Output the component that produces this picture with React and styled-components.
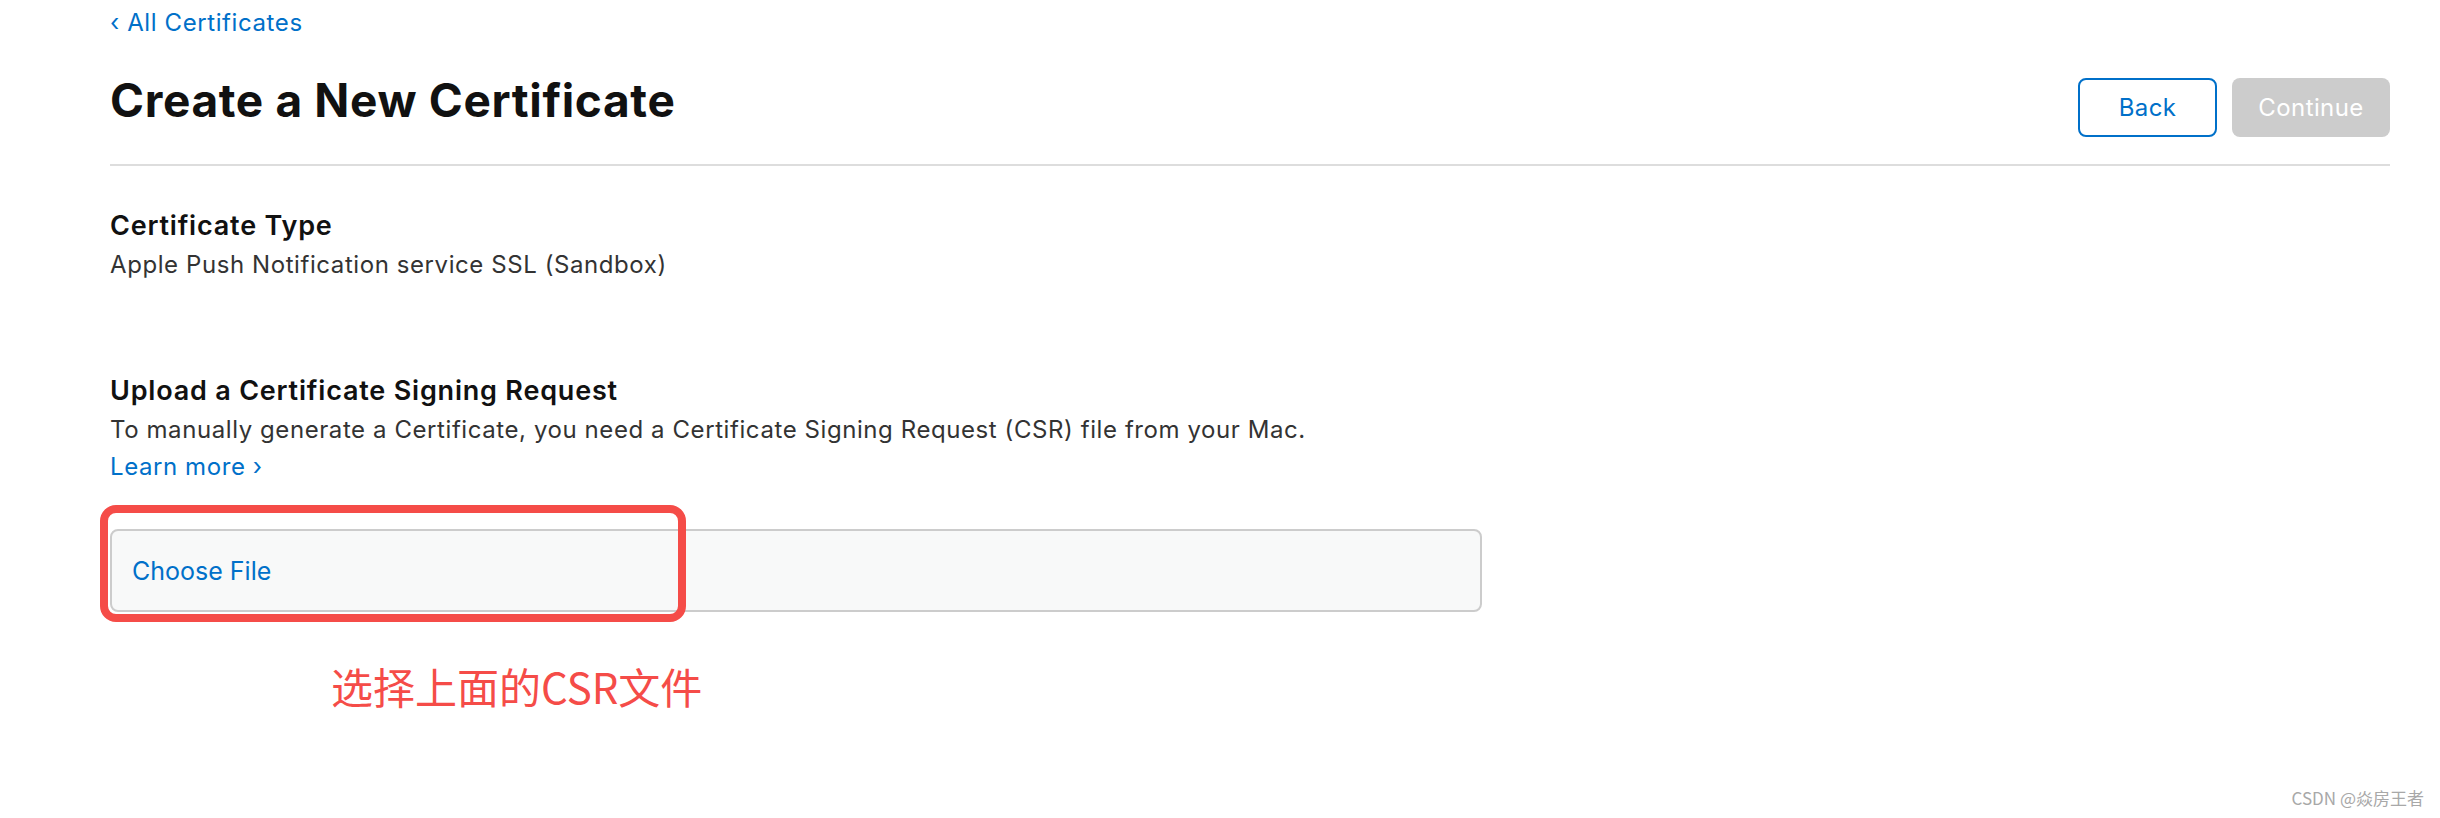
import React from 'react';
import styled, { createGlobalStyle } from 'styled-components';

const GlobalStyle = createGlobalStyle`
  html, body {
    margin: 0;
    padding: 0;
    background: #fff;
  }
  body {
    font-family: Inter, 'Noto Sans', 'Liberation Sans', sans-serif;
    color: #111;
  }
`;

const Page = styled.div`
  position: relative;
  box-sizing: border-box;
  height: 818px;
  overflow: hidden;
  padding: 8px 50px 0 110px;
`;

const BackLink = styled.a`
  display: block;
  font-size: 24px;
  line-height: 30px;
  letter-spacing: 0.6px;
  color: #0070c9;
  text-decoration: none;
`;

const Header = styled.div`
  display: flex;
  justify-content: space-between;
  align-items: flex-start;
  padding: 34px 0 27px;
  border-bottom: 2px solid #dddddd;
`;

const Title = styled.h1`
  margin: 0;
  font-size: 46px;
  line-height: 56px;
  font-weight: 700;
  color: #111;
  letter-spacing: 0.65px;
`;

const Actions = styled.div`
  display: flex;
  gap: 15px;
  margin-top: 6px;
`;

const Button = styled.button`
  box-sizing: border-box;
  height: 59px;
  min-width: ${(p) => (p.$primary ? '158px' : '139px')};
  padding: 0 20px;
  font-family: inherit;
  font-size: 24px;
  letter-spacing: 0.4px;
  border-radius: 8px;
  cursor: pointer;
  border: ${(p) => (p.$primary ? 'none' : '2px solid #0070c9')};
  background: ${(p) => (p.$primary ? '#cccccc' : '#fff')};
  color: ${(p) => (p.$primary ? '#fff' : '#0070c9')};
`;

const Section = styled.section`
  margin-top: ${(p) => p.$gap}px;
`;

const SectionTitle = styled.h2`
  margin: 0 0 3px;
  font-size: 27px;
  line-height: 34px;
  font-weight: 600;
  letter-spacing: 0.8px;
  color: #111;
`;

const Text = styled.p`
  margin: 0;
  font-size: 24px;
  line-height: 37px;
  letter-spacing: 0.58px;
  color: #333;
`;

const LearnMore = styled.a`
  display: block;
  font-size: 24px;
  line-height: 37px;
  letter-spacing: 0.58px;
  color: #0070c9;
  text-decoration: none;
`;

const Upload = styled.div`
  position: relative;
  margin-top: 44px;
  width: 1372px;
`;

const FileField = styled.label`
  box-sizing: border-box;
  display: flex;
  align-items: center;
  height: 83px;
  padding-left: 20px;
  border: 2px solid #cccccc;
  border-radius: 8px;
  background: #f8f9f9;
  font-size: 25px;
  color: #0070c9;
  cursor: pointer;
`;

const Highlight = styled.div`
  position: absolute;
  left: -10px;
  top: -24px;
  width: 586px;
  height: 117px;
  box-sizing: border-box;
  border: 8px solid #f54c48;
  border-radius: 16px;
  pointer-events: none;
`;

const Note = styled.div`
  margin: 47px 0 0 221px;
  font-family: 'Noto Sans CJK SC', Inter, sans-serif;
  font-size: 42px;
  line-height: 54px;
  color: #f54c48;
`;

const Watermark = styled.div`
  position: absolute;
  right: 16px;
  bottom: 8px;
  font-family: 'Noto Sans CJK SC', 'Liberation Sans', sans-serif;
  font-size: 17px;
  color: #a8a8a8;
`;

export default function App() {
  return (
    <>
      <GlobalStyle />
      <Page>
        <BackLink href="#">‹ All Certificates</BackLink>
        <Header>
          <Title>Create a New Certificate</Title>
          <Actions>
            <Button>Back</Button>
            <Button $primary disabled>Continue</Button>
          </Actions>
        </Header>

        <Section $gap={43}>
          <SectionTitle>Certificate Type</SectionTitle>
          <Text>Apple Push Notification service SSL (Sandbox)</Text>
        </Section>

        <Section $gap={91}>
          <SectionTitle>Upload a Certificate Signing Request</SectionTitle>
          <Text>
            To manually generate a Certificate, you need a Certificate Signing Request (CSR) file from your Mac.
          </Text>
          <LearnMore href="#">Learn more ›</LearnMore>
        </Section>

        <Upload>
          <FileField>Choose File</FileField>
          <Highlight />
        </Upload>

        <Note>选择上面的CSR文件</Note>

        <Watermark>CSDN @焱房王者</Watermark>
      </Page>
    </>
  );
}
